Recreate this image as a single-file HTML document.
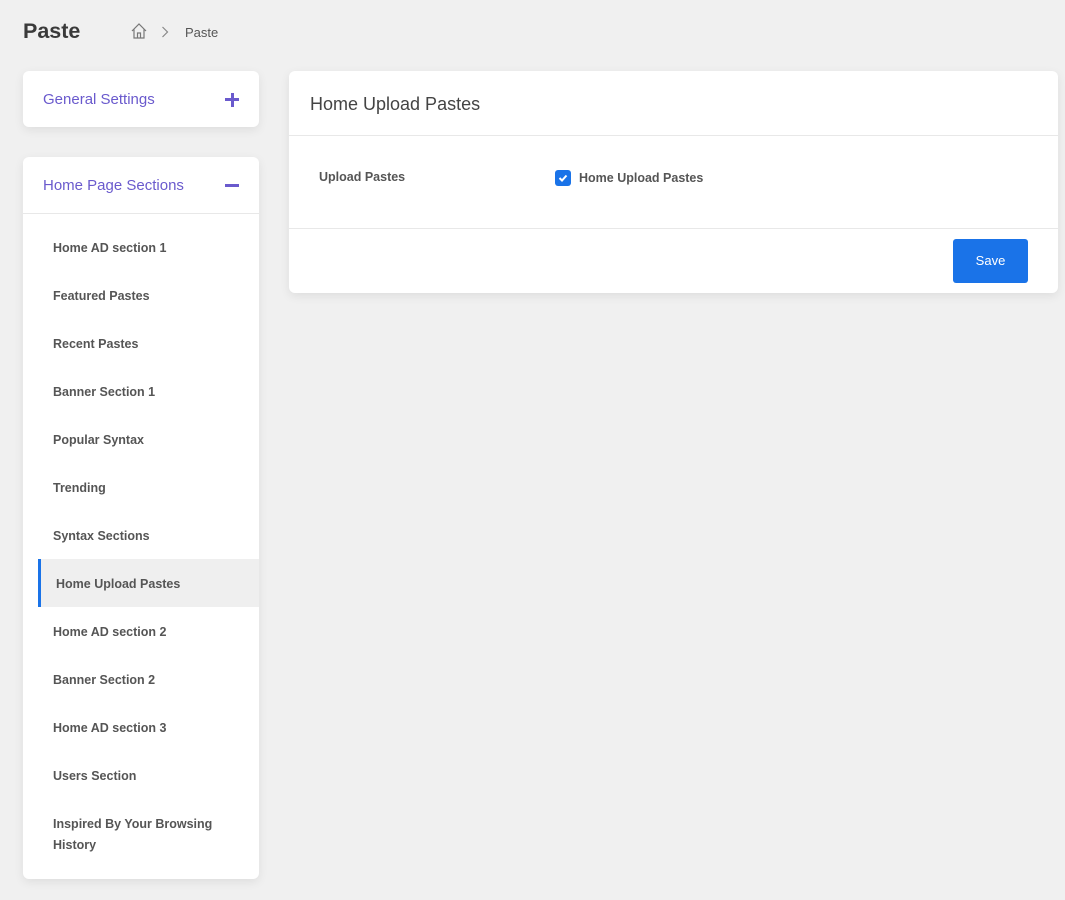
<!DOCTYPE html>
<html><head><style>
*{box-sizing:border-box;margin:0;padding:0}
body{width:1065px;height:900px;background:#f0f0f0;font-family:"Liberation Sans",sans-serif;color:#4a4a4a;position:relative;overflow:hidden}
.abs{position:absolute}
.card{position:absolute;background:#fff;border-radius:6px;box-shadow:0 3px 10px rgba(0,0,0,.08)}
.item{position:absolute;left:30px;font-size:12.5px;font-weight:bold;color:#555;line-height:18px}
</style></head><body>
<div class="abs" style="left:23px;top:19px;font-size:21.5px;font-weight:bold;color:#3a3a3a">Paste</div>
<svg class="abs" style="left:130px;top:22px" width="18" height="18" viewBox="0 0 18 18" fill="none" stroke="#777" stroke-width="1.2"><path d="M2 9 L9 2 L16 9 M4 7.5 V16 H14 V7.5 M7.5 16 V11 H10.5 V16"/></svg>
<svg class="abs" style="left:161px;top:26px" width="8" height="12" viewBox="0 0 8 12" fill="none" stroke="#888" stroke-width="1.2"><path d="M1.5 1 L6.5 6 L1.5 11"/></svg>
<div class="abs" style="left:185px;top:25px;font-size:13px;color:#555">Paste</div>

<div class="card" style="left:23px;top:71px;width:236px;height:56px">
<div class="abs" style="left:20px;top:20px;font-size:15px;color:#6a5acd">General Settings</div>
<div class="abs" style="left:202px;top:27px;width:14px;height:3px;background:#6a5acd"></div>
<div class="abs" style="left:207.5px;top:21.5px;width:3px;height:14px;background:#6a5acd"></div>
</div>

<div class="card" style="left:23px;top:157px;width:236px;height:722px">
<div class="abs" style="left:20px;top:20px;font-size:15px;color:#6a5acd">Home Page Sections</div>
<div class="abs" style="left:202px;top:27px;width:14px;height:3px;background:#6a5acd"></div>
<div class="abs" style="left:0;top:56px;width:236px;height:1px;background:#e8e8e8"></div>
<div class="abs" style="left:15px;top:402px;width:221px;height:48px;background:#efefef;border-left:3px solid #1a73e8"></div>
<div class="item" style="top:82px">Home AD section 1</div>
<div class="item" style="top:130px">Featured Pastes</div>
<div class="item" style="top:178px">Recent Pastes</div>
<div class="item" style="top:226px">Banner Section 1</div>
<div class="item" style="top:274px">Popular Syntax</div>
<div class="item" style="top:322px">Trending</div>
<div class="item" style="top:370px">Syntax Sections</div>
<div class="item" style="top:418px;left:33px">Home Upload Pastes</div>
<div class="item" style="top:466px">Home AD section 2</div>
<div class="item" style="top:514px">Banner Section 2</div>
<div class="item" style="top:562px">Home AD section 3</div>
<div class="item" style="top:610px">Users Section</div>
<div class="item" style="top:657px;line-height:21px">Inspired By Your Browsing<br>History</div>
</div>

<div class="card" style="left:289px;top:71px;width:769px;height:222px">
<div class="abs" style="left:21px;top:23px;font-size:18px;color:#444">Home Upload Pastes</div>
<div class="abs" style="left:0;top:64px;width:769px;height:1px;background:#e8e8e8"></div>
<div class="abs" style="left:30px;top:99px;font-size:12.5px;font-weight:bold;color:#555">Upload Pastes</div>
<div class="abs" style="left:266px;top:99px;width:16px;height:16px;background:#1a73e8;border-radius:3px">
<svg width="16" height="16" viewBox="0 0 16 16" fill="none" stroke="#fff" stroke-width="2"><path d="M4.5 8 L7 10.5 L11.5 5.5"/></svg></div>
<div class="abs" style="left:290px;top:100px;font-size:12.5px;font-weight:bold;color:#555">Home Upload Pastes</div>
<div class="abs" style="left:0;top:157px;width:769px;height:1px;background:#e8e8e8"></div>
<div class="abs" style="left:664px;top:168px;width:75px;height:44px;background:#1a73e8;border-radius:3px;color:#fff;font-size:13px;text-align:center;line-height:44px">Save</div>
</div>
</body></html>
